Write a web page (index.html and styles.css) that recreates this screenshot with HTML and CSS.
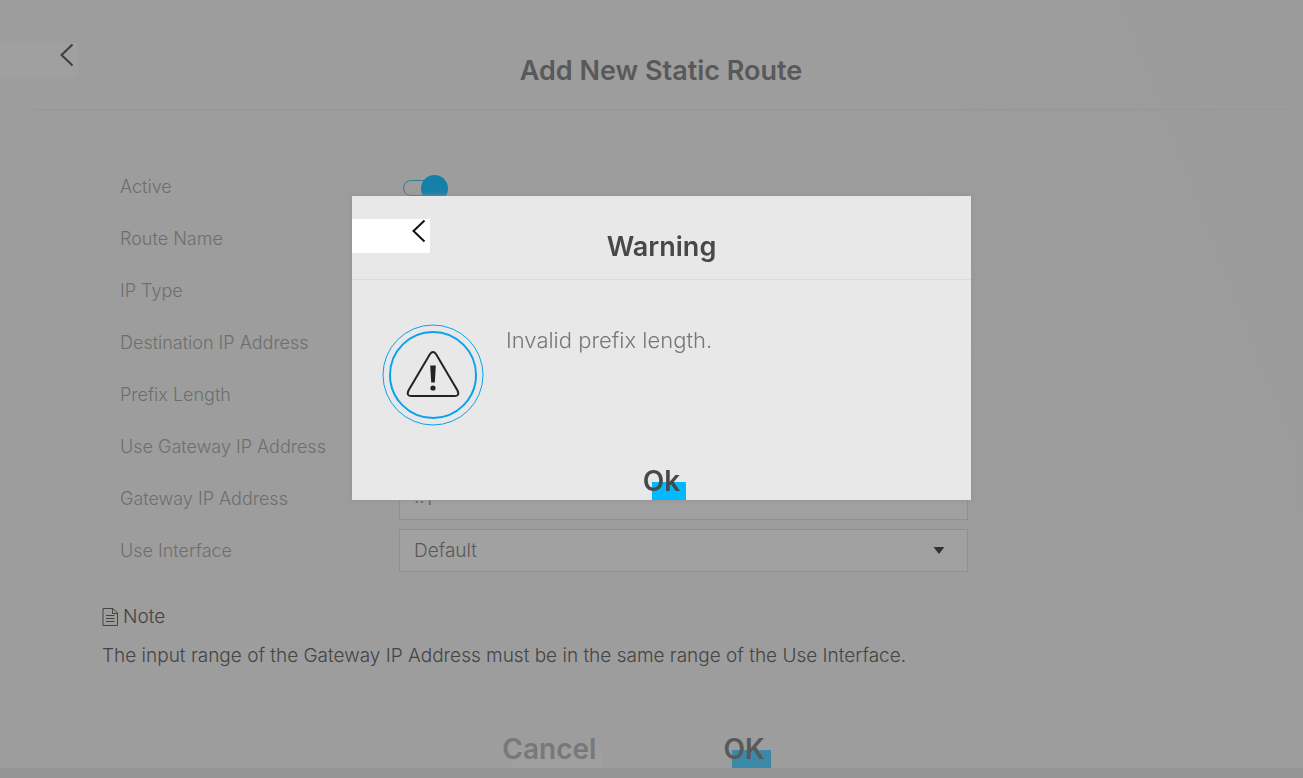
FILE: index.html
```html
<!DOCTYPE html>
<html lang="en">
<head>
    <meta charset="UTF-8">
    <meta name="viewport" content="width=device-width, initial-scale=1.0">
    <title>Add New Static Route</title>
    <link rel="stylesheet" href="styles.css">
</head>
<body>
    <main class="page">
        <header class="page-header">
            <button type="button" class="back-button" aria-label="Back">
                <svg width="14" height="24" viewBox="0 0 14 24"><path d="M12.5 1.5 L1.5 12 L12.5 22.5"/></svg>
            </button>
            <h1>Add New Static Route</h1>
        </header>
        <hr class="divider">

        <form id="route-form" class="route-form">
            <label for="active">Active</label>
            <input type="checkbox" id="active" class="toggle" checked>
            <label for="route-name">Route Name</label>
            <input type="text" id="route-name" class="field">
            <label for="ip-type">IP Type</label>
            <select id="ip-type" class="field"><option>IPv6</option></select>
            <label for="destination">Destination IP Address</label>
            <input type="text" id="destination" class="field">
            <label for="prefix-length">Prefix Length</label>
            <input type="text" id="prefix-length" class="field">
            <label for="use-gateway">Use Gateway IP Address</label>
            <input type="checkbox" id="use-gateway" class="toggle" checked>
            <label for="gateway">Gateway IP Address</label>
            <input type="text" id="gateway" class="field" value="::1">
            <label for="interface">Use Interface</label>
            <div class="select-wrap">
                <select id="interface" class="field"><option>Default</option></select>
                <svg class="caret" width="12" height="7" viewBox="0 0 12 7"><path d="M0.5 0 H11.5 L6 7 Z"/></svg>
            </div>
        </form>

        <section class="note">
            <h2>
                <svg width="17" height="20" viewBox="0 0 17 20"><path d="M1 1.5 H11 L15.5 6 V18.5 H1 Z M10.5 1.5 V6.5 H15.5 M4 8.5 H12.5 M4 11.5 H12.5 M4 14.5 H12.5"/></svg>
                Note
            </h2>
            <p>The input range of the Gateway IP Address must be in the same range of the Use Interface.</p>
        </section>

        <footer class="page-actions">
            <button type="button" class="action cancel">Cancel</button>
            <button type="submit" form="route-form" class="action confirm">OK</button>
        </footer>
    </main>

    <div class="overlay">
        <div class="dialog" role="alertdialog" aria-modal="true" aria-labelledby="dialog-title" aria-describedby="dialog-text">
            <header class="dialog-header">
                <button type="button" class="back-button" aria-label="Close">
                    <svg width="14" height="24" viewBox="0 0 14 24"><path d="M12.5 1.5 L1.5 12 L12.5 22.5"/></svg>
                </button>
                <h2 id="dialog-title">Warning</h2>
            </header>
            <div class="dialog-body">
                <svg class="warning-icon" width="102" height="102" viewBox="0 0 102 102">
                    <circle class="ring-outer" cx="51" cy="51" r="50"/>
                    <circle class="ring-inner" cx="51" cy="51" r="43"/>
                    <path class="triangle" d="M48 30 Q51 26 54 30 L75.5 66.5 Q78 72 72.5 72 H29.5 Q24 72 26.5 66.5 Z"/>
                    <path class="mark" d="M48.2 41.5 H53.8 L52.8 58.5 H49.2 Z"/>
                    <circle class="mark" cx="51" cy="64" r="2.6"/>
                </svg>
                <p id="dialog-text">Invalid prefix length.</p>
            </div>
            <footer class="dialog-actions">
                <button type="button" class="action ok">Ok</button>
            </footer>
        </div>
    </div>
</body>
</html>
```
FILE: styles.css
```css
:root {
    --text-color: #595959;
    --label-color: #6e6e6e;
    --border-color: #8f8f8f;
    --primary-color: #00b9ff;
}

* {
    box-sizing: border-box;
}

body {
    font-family: "Century Gothic", Inter, "Liberation Sans", sans-serif;
    font-size: 19px;
    font-weight: 300;
    color: var(--text-color);
    background-color: #959595;
    margin: 0;
}

h1, h2, p {
    margin: 0;
}

button, input, select {
    font: inherit;
    color: inherit;
}

svg {
    fill: none;
    stroke: currentColor;
}

.page {
    background: linear-gradient(69deg, #9c9c9c, #9d9d9d 12%, #9d9d9d 70%, #9b9b9b);
    box-shadow: 0 2px 4px #888888;
}

.page-header, .dialog-header {
    display: grid;
}

.page-header > *, .dialog-header > * {
    grid-area: 1 / 1;
}

.page-header {
    height: 109px;
}

.page-header h1 {
    padding: 33px 14px 0 33px;
    line-height: 76px;
}

h1, #dialog-title {
    font-size: 27px;
    font-weight: 600;
    text-align: center;
}

.back-button {
    display: flex;
    justify-content: flex-end;
    width: 78px;
    height: 34px;
    padding: 0 4px 0 0;
    border: 0;
    background: #a0a0a0;
    color: #3d3d3d;
    z-index: 1;
}

.back-button svg {
    stroke-width: 2;
}

.page-header .back-button {
    margin-top: 43px;
}

.divider {
    margin: 0 14px 0 33px;
    border: 0;
    border-top: 1px solid #969696;
}

.route-form {
    display: grid;
    grid-template-columns: 279px 1fr;
    grid-auto-rows: 43px;
    row-gap: 9px;
    align-items: center;
    max-width: 968px;
    padding: 55px 0 0 120px;
}

.route-form label {
    font-size: 18px;
    color: var(--label-color);
}

.field {
    width: 100%;
    height: 43px;
    padding: 0 14px;
    border: 1px solid var(--border-color);
    border-radius: 0;
    background: #a1a1a1;
    appearance: none;
}

.select-wrap {
    display: grid;
    align-items: center;
}

.select-wrap > * {
    grid-area: 1 / 1;
}

.caret {
    justify-self: end;
    margin-right: 23px;
    fill: #333333;
    stroke: none;
    pointer-events: none;
}

.toggle {
    display: flex;
    align-items: center;
    justify-content: flex-end;
    appearance: none;
    width: 44px;
    height: 16px;
    margin: 3px 0 0 4px;
    border: 1px solid #2f7f99;
    border-radius: 8px;
}

.toggle::before {
    content: "";
    flex: none;
    width: 27px;
    height: 27px;
    margin-right: -2px;
    border-radius: 50%;
    background: #1480a8;
}

.note {
    padding: 30px 20px 0 102px;
    color: #444444;
}

.note h2 {
    display: flex;
    align-items: center;
    gap: 4px;
    font-size: 19px;
    font-weight: 300;
    line-height: 30px;
}

.note p {
    padding-top: 9px;
    line-height: 30px;
}

.page-actions {
    display: flex;
    justify-content: center;
    gap: 121px;
    padding: 59px 30px 0 0;
}

.action {
    height: 38px;
    padding: 0 6px 0 0;
    border: 0;
    background: linear-gradient(var(--block-color), var(--block-color)) no-repeat right bottom / calc(100% - 9px) 18px;
    font-size: 28px;
    font-weight: 600;
    line-height: 38px;
}

.cancel {
    --block-color: #9f9f9f;
    color: #787878;
}

.confirm {
    --block-color: #3a89a9;
}

.ok {
    --block-color: var(--primary-color);
}

.overlay {
    position: fixed;
    inset: 0;
    display: flex;
    justify-content: center;
    align-items: flex-start;
    padding: 196px 0 0 20px;
}

.dialog {
    width: 100%;
    max-width: 619px;
    background: #e8e8e8;
    box-shadow: 0 0 5px #8e8e8e;
    color: #484848;
}

.dialog-header {
    height: 84px;
    border-bottom: 1px solid #dcdcdc;
}

.dialog-header h2 {
    padding-top: 19px;
    line-height: 64px;
}

.dialog-header .back-button {
    margin-top: 23px;
    background: #ffffff;
    color: #111111;
}

.dialog-body {
    display: flex;
    align-items: flex-start;
    gap: 22px;
    min-height: 182px;
    padding: 44px 30px 0;
}

.dialog-body p {
    font-size: 22px;
    line-height: 32px;
    color: #777777;
}

.warning-icon {
    flex: none;
}

.ring-outer, .ring-inner {
    stroke: #0aa2ec;
}

.ring-inner {
    stroke-width: 2;
}

.triangle {
    stroke: #222222;
    stroke-width: 2;
}

.mark {
    fill: #222222;
    stroke: none;
}

.dialog-actions {
    display: flex;
    justify-content: center;
    padding-left: 6px;
}
```
